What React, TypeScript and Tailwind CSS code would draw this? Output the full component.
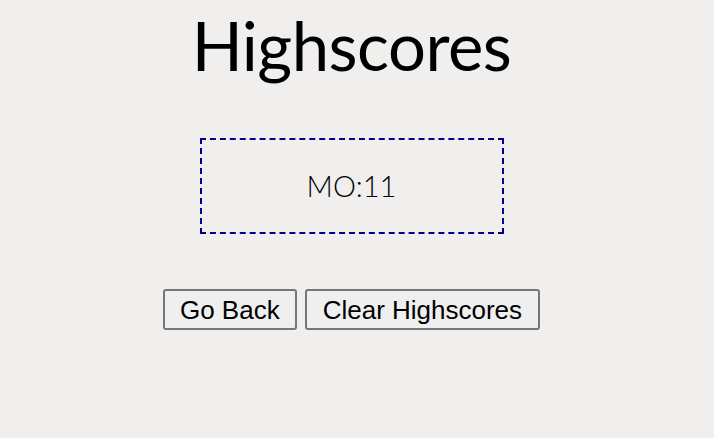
import type { FC } from 'react';

const App: FC = () => {
    return (
        <div className="min-h-[438px] w-full bg-[#f0efee] text-black">
            <div className="w-[703px] flex flex-col items-center">
                <h1 className="mt-[7px] text-[67px] leading-[76px] font-normal font-['Lato',sans-serif] tracking-[-0.5px]">
                    Highscores
                </h1>
                <div className="mt-[55px] w-[304px] h-[96px] border-2 border-dashed border-[#00008b] flex items-center justify-center">
                    <span className="text-[29px] font-light font-['Lato',sans-serif]">MO:11</span>
                </div>
                <div className="mt-[55px] flex gap-[8px]">
                    <button className="h-[41px] px-[15px] bg-[#efefef] border-2 border-[#767676] rounded-[3px] text-[26px] font-['Liberation_Sans',Arial,sans-serif]">
                        Go Back
                    </button>
                    <button className="h-[41px] px-[16px] bg-[#efefef] border-2 border-[#767676] rounded-[3px] text-[26px] font-['Liberation_Sans',Arial,sans-serif]">
                        Clear Highscores
                    </button>
                </div>
            </div>
        </div>
    );
};

export default App;
